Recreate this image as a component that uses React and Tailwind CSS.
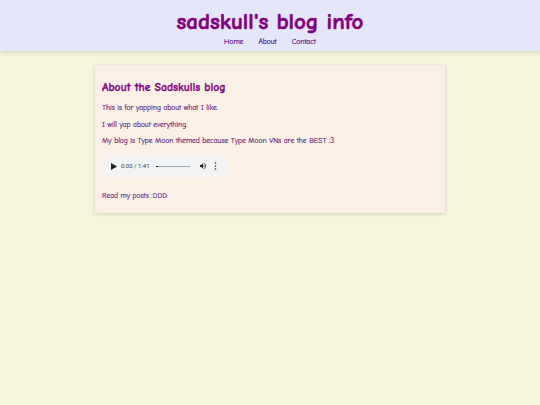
import React from "react";

const font = { fontFamily: '"Comic Sans MS", "Comic Neue", "DejaVu Sans", sans-serif' };

function AudioPlayer() {
  // static stand-in for the native <audio controls> bar
  return (
    <div className="flex h-[21px] w-[126px] items-center rounded-full bg-[#f1f3f4] pl-[9px] font-['Roboto',sans-serif]">
      <svg width="6" height="7" viewBox="0 0 6 7" className="mr-[4px] shrink-0">
        <path d="M0 0 L6 3.5 L0 7 Z" fill="#1f1f1f" />
      </svg>
      <span className="whitespace-nowrap text-[6px] leading-none text-[#3c4043]">0:00 / 1:41</span>
      <div className="ml-[6px] h-[1px] w-[34px] shrink-0 bg-[#9aa0a6]">
        <div className="h-[1px] w-[2px] bg-[#1f1f1f]" />
      </div>
      <svg width="8" height="8" viewBox="0 0 24 24" className="ml-[9px] shrink-0">
        <path d="M3 9v6h4l5 5V4L7 9H3zm13.5 3A4.5 4.5 0 0014 8v8a4.47 4.47 0 002.5-4zM14 3.23v2.06a7 7 0 010 13.42v2.06A9 9 0 0014 3.23z" fill="#1f1f1f" />
      </svg>
      <svg width="3" height="8" viewBox="0 0 3 8" className="ml-[7px] shrink-0">
        <circle cx="1.5" cy="1" r="0.8" fill="#1f1f1f" />
        <circle cx="1.5" cy="4" r="0.8" fill="#1f1f1f" />
        <circle cx="1.5" cy="7" r="0.8" fill="#1f1f1f" />
      </svg>
    </div>
  );
}

export default function App() {
  return (
    <div className="min-h-[405px] bg-[#f5f5dc]" style={font}>
      <header className="flex h-[51px] flex-col items-center bg-[#e6e6fa] shadow-[0_2px_4px_rgba(0,0,0,0.12)]">
        <h1 className="mt-[7px] text-[23px] font-bold leading-[30px] text-[#800080] [-webkit-text-stroke:0.6px_#800080]">
          sadskull's blog info
        </h1>
        <nav className="flex gap-[15px] text-[7.5px] leading-[10px] text-[#4b0082] [-webkit-text-stroke:0.15px_#4b0082]">
          <a>Home</a>
          <a>About</a>
          <a>Contact</a>
        </nav>
      </header>

      <main className="flex justify-center pt-[14px]">
        <section className="w-[350px] bg-[#faf0e6] px-[7px] pb-[12px] pt-[14px] shadow-[0_1px_4px_rgba(0,0,0,0.15)]">
          <h2 className="text-[11.7px] font-bold leading-[16px] text-[#800080] [-webkit-text-stroke:0.3px_#800080]">
            About the Sadskulls blog
          </h2>
          <div className="mt-[8px] flex flex-col gap-[6px] text-[7.5px] leading-[10.5px] text-[#5e1777] [-webkit-text-stroke:0.15px_#5e1777]">
            <p>This is for yapping about what I like.</p>
            <p>I will yap about everything.</p>
            <p>My blog is Type Moon themed because Type Moon VNs are the BEST :3</p>
          </div>
          <div className="mt-[9px]">
            <AudioPlayer />
          </div>
          <a className="mt-[14px] block text-[7.5px] leading-[10px] text-[#55288a] [-webkit-text-stroke:0.15px_#55288a]">
            Read my posts :DDD
          </a>
        </section>
      </main>
    </div>
  );
}
